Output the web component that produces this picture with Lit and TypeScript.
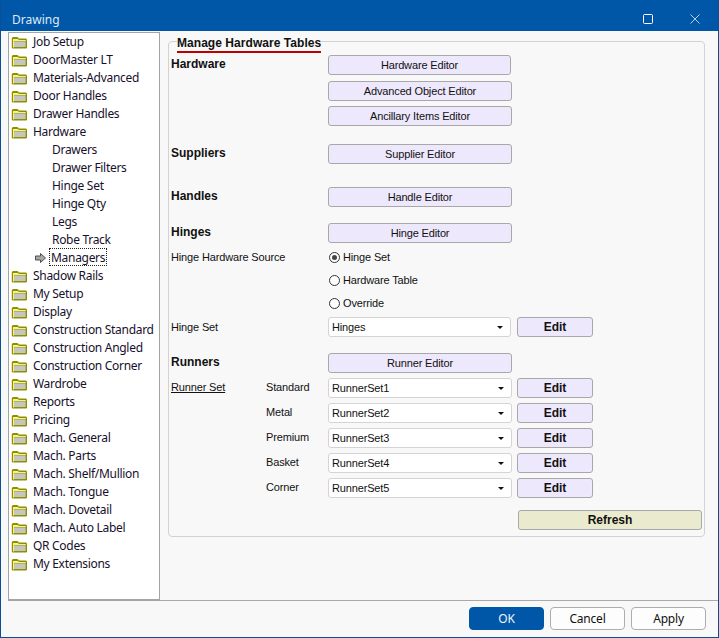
import { LitElement, html, css } from "lit";
import { customElement } from "lit/decorators.js";

const folder = html`<svg class="folder" width="17" height="13" viewBox="0 0 17 13"><path d="M.8 12V2.2L1.8 1H6.5L8 2.5H15L16 3.5V12L15 12.6H1.5Z" fill="#8f8f00"/><path d="M2 3H7L8 4H14.8V5H2Z" fill="#f4f47c"/><path d="M2.6 5.4H14.6V11H2.6Z" fill="#c6c6c0"/><path d="M2 5H3V11.4H2Z" fill="#f4f47c"/></svg>`;
const arrow = html`<svg class="arrow" width="11" height="10" viewBox="0 0 11 10"><path d="M0.5 3H5.5V0.5L10.5 5L5.5 9.5V7H0.5Z" fill="#a8a8a8" stroke="#505050" stroke-width="1"/></svg>`;

type Node = [string, number?];
const tree: Node[] = [
  ["Job Setup"], ["DoorMaster LT"], ["Materials-Advanced"], ["Door Handles"], ["Drawer Handles"], ["Hardware"],
  ["Drawers", 1], ["Drawer Filters", 1], ["Hinge Set", 1], ["Hinge Qty", 1], ["Legs", 1], ["Robe Track", 1], ["Managers", 2],
  ["Shadow Rails"], ["My Setup"], ["Display"], ["Construction Standard"], ["Construction Angled"], ["Construction Corner"],
  ["Wardrobe"], ["Reports"], ["Pricing"], ["Mach. General"], ["Mach. Parts"], ["Mach. Shelf/Mullion"], ["Mach. Tongue"],
  ["Mach. Dovetail"], ["Mach. Auto Label"], ["QR Codes"], ["My Extensions"],
];

@customElement("app-root")
export class AppRoot extends LitElement {
  static styles = css`
    :host { display: block; width: 719px; height: 638px; }
    * { box-sizing: border-box; }
    .win { width: 719px; height: 638px; border: 1px solid #0a4f96; border-top: 0; background: #f8f8f8; display: flex; flex-direction: column; font: 11px "Liberation Sans", Arial, sans-serif; letter-spacing: -0.15px; color: #111; }
    .title { height: 31px; flex: none; background: #0057a8; color: #dfe9f4; display: flex; align-items: center; padding: 7px 18px 0 11px; font: 12px "Noto Sans", sans-serif; letter-spacing: 0; }
    .title span { flex: 1; }
    .title svg { display: block; }
    .max { margin-right: 37px; }
    .main { flex: 1; display: flex; min-height: 0; padding: 1px 0 0 7px; }
    .tree { width: 152px; height: 569px; flex: none; background: #fff; border: 1px solid #a4a4a4; border-width: 1px 1px 2px 1px; font: 12px "Noto Sans", sans-serif; color: #16102c; letter-spacing: -0.3px; }
    .node { height: 18px; display: flex; align-items: center; padding-left: 2px; white-space: nowrap; }
    .node > span.t { position: relative; top: -1px; }
    .folder { margin-right: 5px; flex: none; }
    .leaf { padding-left: 43px; }
    .cur { padding-left: 26px; }
    .arrow { margin-right: 5px; flex: none; }
    .sel { border: 1px dotted #222; padding: 0 1px; height: 18px; display: flex; align-items: center; margin-left: -2px; position: relative; top: -1px; }
    .content { flex: 1; padding: 9px 0 0 8px; border-bottom: 1px solid #a9a9a9; height: 569px; }
    .group { position: relative; width: 537px; height: 496px; border: 1px solid #d2d2d2; border-radius: 4px; padding: 13px 0 0 2px; }
    .legend { position: absolute; left: 8px; top: -5px; padding: 0; height: 16px; line-height: 13px; background: #f8f8f8; font-family: "Liberation Sans", sans-serif; font-size: 12px; font-weight: bold; letter-spacing: 0.05px; border-bottom: 2px solid #c00000; white-space: nowrap; }
    .row { height: 20px; display: grid; grid-template-columns: 157px 184px 5px 76px; align-items: center; white-space: nowrap; }
    .g3 { margin-top: 3px; } .g4 { margin-top: 4px; } .g5 { margin-top: 5px; } .g6 { margin-top: 6px; } .g12 { margin-top: 12px; } .g16 { margin-top: 16px; } .g18 { margin-top: 18px; } .g23 { margin-top: 23px; }
    .h { font-size: 12px; font-weight: bold; letter-spacing: 0; position: relative; top: -1px; }
    .l { position: relative; top: -1px; }
    .label2 { display: grid; grid-template-columns: 95px 62px; }
    .u { text-decoration: underline; }
    .btn { height: 20px; background: #eee8fd; border: 1px solid #a8a8a8; border-radius: 3px; display: flex; align-items: center; justify-content: center; color: #111; }
    .short { margin-right: 1px; }
    .edit { font-weight: bold; font-size: 12px; letter-spacing: 0; grid-column: 4; }
    .refresh { background: #eaeace; font-weight: bold; font-size: 12px; letter-spacing: 0; width: 184px; }
    .rowr { height: 20px; display: flex; padding-left: 347px; }
    .combo { height: 20px; background: #fff; border: 1px solid #d4d4d4; border-radius: 3px; display: flex; align-items: center; justify-content: space-between; padding: 0 7px 0 3px; }
    .combo i { width: 0; height: 0; border: 3px solid transparent; border-top: 3px solid #111; border-bottom: 0; }
    .radio { display: flex; align-items: center; gap: 3px; padding-left: 1px; }
    .dot { width: 11px; height: 11px; border: 1px solid #333; border-radius: 50%; background: #fff; display: flex; align-items: center; justify-content: center; flex: none; }
    .dot.on::after { content: ""; width: 5px; height: 5px; border-radius: 50%; background: #444; }
    .foot { height: 36px; flex: none; display: flex; gap: 6px; padding: 6px 0 0 468px; }
    .fb { width: 75px; height: 23px; background: #fdfdfd; border: 1px solid #adadad; border-radius: 4px; display: flex; align-items: center; justify-content: center; font: 12px "Noto Sans", sans-serif; letter-spacing: -0.2px; }
    .ok { background: #0057a8; border-color: #0057a8; color: #f0f5fb; }
  `;

  private row(label: unknown, mid: unknown, gap = "", edit = false) {
    return html`<div class="row ${gap}"><div>${label}</div>${mid}${edit ? html`<div class="btn edit">Edit</div>` : ""}</div>`;
  }
  private combo(v: string, short = false) {
    return html`<div class="combo ${short ? "short" : ""}"><span>${v}</span><i></i></div>`;
  }
  private b(t: string, short = false) {
    return html`<div class="btn ${short ? "short" : ""}">${t}</div>`;
  }
  private radio(t: string, on = false) {
    return html`<div class="radio"><span class="dot ${on ? "on" : ""}"></span>${t}</div>`;
  }

  render() {
    const runners = ["Standard", "Metal", "Premium", "Basket", "Corner"];
    return html`<div class="win">
      <div class="title"><span>Drawing</span>
        <svg class="max" width="10" height="10" viewBox="0 0 10 10"><rect x=".5" y=".5" width="9" height="9" rx="1" fill="none" stroke="#fff"/></svg>
        <svg width="10" height="10" viewBox="0 0 10 10"><path d="M.5.5l9 9M9.5.5l-9 9" stroke="#b8d0e8" fill="none"/></svg>
      </div>
      <div class="main">
        <div class="tree">
          ${tree.map(([t, k]) => k === 1
            ? html`<div class="node leaf"><span class="t">${t}</span></div>`
            : k === 2
              ? html`<div class="node cur">${arrow}<span class="sel">${t}</span></div>`
              : html`<div class="node">${folder}<span class="t">${t}</span></div>`)}
        </div>
        <div class="content">
          <div class="group">
            <div class="legend">Manage Hardware Tables</div>
            ${this.row(html`<span class="h">Hardware</span>`, this.b("Hardware Editor", true))}
            ${this.row("", this.b("Advanced Object Editor"), "g6")}
            ${this.row("", this.b("Ancillary Items Editor"), "g5")}
            ${this.row(html`<span class="h">Suppliers</span>`, this.b("Supplier Editor"), "g18")}
            ${this.row(html`<span class="h">Handles</span>`, this.b("Handle Editor"), "g23")}
            ${this.row(html`<span class="h">Hinges</span>`, this.b("Hinge Editor"), "g16")}
            ${this.row(html`<span>Hinge Hardware Source</span>`, this.radio("Hinge Set", true), "g4")}
            ${this.row("", this.radio("Hardware Table"), "g3")}
            ${this.row("", this.radio("Override"), "g3")}
            ${this.row(html`<span>Hinge Set</span>`, this.combo("Hinges", true), "g4", true)}
            ${this.row(html`<span class="h">Runners</span>`, this.b("Runner Editor"), "g16")}
            ${runners.map((r, i) => html`<div class="row g5">
              <div class="label2"><span class="l u">${i === 0 ? "Runner Set" : ""}</span><span class="l">${r}</span></div>
              ${this.combo("RunnerSet" + (i + 1))}
              <div class="btn edit">Edit</div>
            </div>`)}
            <div class="rowr g12"><div class="btn refresh">Refresh</div></div>
          </div>
        </div>
      </div>
      <div class="foot">
        <div class="fb ok">OK</div><div class="fb">Cancel</div><div class="fb">Apply</div>
      </div>
    </div>`;
  }
}
